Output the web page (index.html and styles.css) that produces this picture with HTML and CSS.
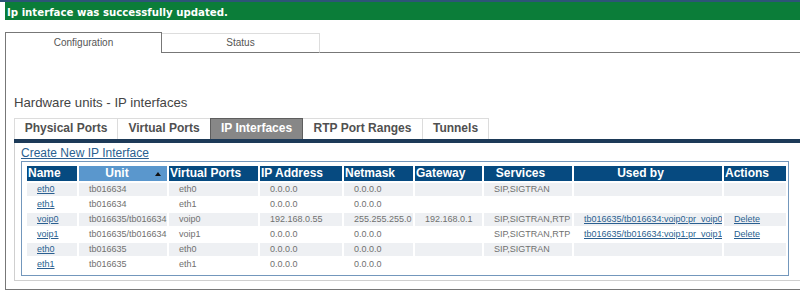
FILE: index.html
```html
<!DOCTYPE html>
<html>
<head>
<meta charset="utf-8">
<title>Hardware units - IP interfaces</title>
<link rel="stylesheet" href="styles.css">
</head>
<body>
<div class="topline"></div>
<div class="notice">Ip interface was successfully updated.</div>
<div class="outer">
  <div class="main-tabs">
    <div class="mtab mtab-active">Configuration</div>
    <div class="mtab mtab-status">Status</div>
    <div class="mfill"></div>
  </div>
  <div class="content">
    <h2 class="title">Hardware units - IP interfaces</h2>
    <div class="subtabs">
      <div class="stab w-phys">Physical Ports</div>
      <div class="stab w-virt">Virtual Ports</div>
      <div class="stab stab-active w-ip">IP Interfaces</div>
      <div class="stab w-rtp">RTP Port Ranges</div>
      <div class="stab w-tun">Tunnels</div>
    </div>
    <div class="band"></div>
    <div class="subpanel">
      <a class="create" href="#">Create New IP Interface</a>
      <div class="tbox">
        <table class="grid">
          <thead>
            <tr>
              <th class="c-name">Name</th>
              <th class="c-unit sorted"><svg class="sort" width="6" height="4" viewBox="0 0 6 4"><polygon points="0,4 6,4 3,0" fill="#111"/></svg>Unit</th>
              <th class="c-vp">Virtual Ports</th>
              <th class="c-ip">IP Address</th>
              <th class="c-mask">Netmask</th>
              <th class="c-gw">Gateway</th>
              <th class="c-svc ctr">Services</th>
              <th class="c-used ctr">Used by</th>
              <th class="c-act">Actions</th>
            </tr>
          </thead>
          <tbody>
            <tr class="odd">
              <td><a href="#">eth0</a></td><td>tb016634</td><td>eth0</td><td>0.0.0.0</td><td>0.0.0.0</td><td></td><td>SIP,SIGTRAN</td><td></td><td></td>
            </tr>
            <tr>
              <td><a href="#">eth1</a></td><td>tb016634</td><td>eth1</td><td>0.0.0.0</td><td>0.0.0.0</td><td></td><td></td><td></td><td></td>
            </tr>
            <tr class="odd">
              <td><a href="#">voip0</a></td><td>tb016635/tb016634</td><td>voip0</td><td>192.168.0.55</td><td>255.255.255.0</td><td>192.168.0.1</td><td>SIP,SIGTRAN,RTP</td><td><a href="#">tb016635/tb016634:voip0:pr_voip0</a></td><td><a href="#">Delete</a></td>
            </tr>
            <tr>
              <td><a href="#">voip1</a></td><td>tb016635/tb016634</td><td>voip1</td><td>0.0.0.0</td><td>0.0.0.0</td><td></td><td>SIP,SIGTRAN,RTP</td><td><a href="#">tb016635/tb016634:voip1:pr_voip1</a></td><td><a href="#">Delete</a></td>
            </tr>
            <tr class="odd">
              <td><a href="#">eth0</a></td><td>tb016635</td><td>eth0</td><td>0.0.0.0</td><td>0.0.0.0</td><td></td><td>SIP,SIGTRAN</td><td></td><td></td>
            </tr>
            <tr>
              <td><a href="#">eth1</a></td><td>tb016635</td><td>eth1</td><td>0.0.0.0</td><td>0.0.0.0</td><td></td><td></td><td></td><td></td>
            </tr>
          </tbody>
        </table>
      </div>
    </div>
  </div>
</div>
</body>
</html>
```
FILE: styles.css
```css
html, body {
  margin: 0;
  padding: 0;
  background: #ffffff;
  overflow: hidden;
}
body {
  font-family: "Liberation Sans", Arial, sans-serif;
  color: #444;
}
.topline {
  height: 2px;
  background: #2d5577;
}
.notice {
  margin-left: 5px;
  height: 18px;
  box-sizing: border-box;
  padding: 3px 0 0 2px;
  line-height: 15px;
  background: #0b7d39;
  color: #ffffff;
  font-family: "DejaVu Sans", Verdana, sans-serif;
  font-weight: bold;
  font-size: 10.2px;
  white-space: nowrap;
}
.outer {
  margin: 12px 0 0 5px;
  border-left: 1px solid #777;
  border-bottom: 1px solid #777;
  padding-bottom: 8px;
}
.main-tabs {
  display: flex;
  align-items: flex-end;
}
.mtab {
  box-sizing: border-box;
  font-size: 10px;
  line-height: 14px;
  color: #555;
  text-align: center;
}
.mtab-active {
  width: 156px;
  height: 21px;
  padding-top: 3px;
  border-top: 1px solid #777;
  border-right: 1px solid #777;
  background: #fff;
}
.mtab-status {
  width: 158px;
  height: 20px;
  padding-top: 2px;
  border-top: 1px solid #ddd;
  border-right: 1px solid #ddd;
  border-bottom: 1px solid #777;
}
.mfill {
  flex: 1;
  height: 20px;
  border-bottom: 1px solid #777;
}
.content {
  padding-left: 8px;
}
.title {
  margin: 42px 0 0 0;
  font-size: 13.2px;
  font-weight: normal;
  line-height: 15px;
  color: #444;
}
.subtabs {
  display: flex;
  margin-top: 8px;
}
.stab {
  box-sizing: border-box;
  height: 21px;
  border: 1px solid #dcdcdc;
  border-bottom: none;
  margin-left: -1px;
  padding-bottom: 2px;
  font-size: 12px;
  font-weight: bold;
  line-height: 18px;
  color: #505050;
  text-align: center;
  white-space: nowrap;
  background: #fff;
}
.stab:first-child { margin-left: 0; }
.stab-active {
  position: relative;
  background: #878787;
  border-color: #5e5e5e;
  color: #ffffff;
}
.w-phys { width: 104px; }
.w-virt { width: 94px; }
.w-ip { width: 93px; }
.w-rtp { width: 121px; }
.w-tun { width: 67px; }
.band {
  height: 4px;
  background: #1d3a58;
}
.subpanel {
  border-left: 1px solid #cfcfcf;
  border-bottom: 1px solid #cfcfcf;
  padding: 3px 0 4px 6px;
}
.create {
  display: block;
  width: max-content;
  font-size: 12px;
  line-height: 14px;
  margin-bottom: 1px;
  color: #2a5f90;
  text-decoration: underline;
}
.tbox {
  width: max-content;
  border: 1px solid #7397bc;
  padding: 2px 0 2px 3px;
}
.grid {
  border-collapse: separate;
  border-spacing: 2px;
  table-layout: fixed;
  width: 763px;
}
.grid th, .grid td {
  box-sizing: border-box;
  white-space: nowrap;
  overflow: hidden;
}
.grid th {
  height: 15px;
  padding: 0 0 0 1px;
  line-height: 15px;
  font-size: 12px;
  font-weight: bold;
  color: #ffffff;
  background: #064a80;
  text-align: left;
}
.grid th.ctr {
  text-align: center;
  padding: 0 15px 0 0;
}
.grid th.sorted {
  background: #5a97cd;
  text-align: center;
  padding: 0 6px 0 0;
}
.sort {
  float: right;
  margin-top: 6px;
  display: block;
}
.c-name { width: 50px; }
.c-unit { width: 88px; }
.c-vp { width: 89px; }
.c-ip { width: 82px; }
.c-mask { width: 69px; }
.c-gw { width: 67px; }
.c-svc { width: 88px; }
.c-used { width: 148px; }
.c-act { width: 62px; }
.grid td {
  height: 13px;
  padding: 0 0 0 10px;
  line-height: 13px;
  font-size: 9px;
  color: #707070;
}
.grid tr.odd td {
  background: #eef0f3;
}
.grid td a {
  color: #2a5f90;
  text-decoration: underline;
}
```
